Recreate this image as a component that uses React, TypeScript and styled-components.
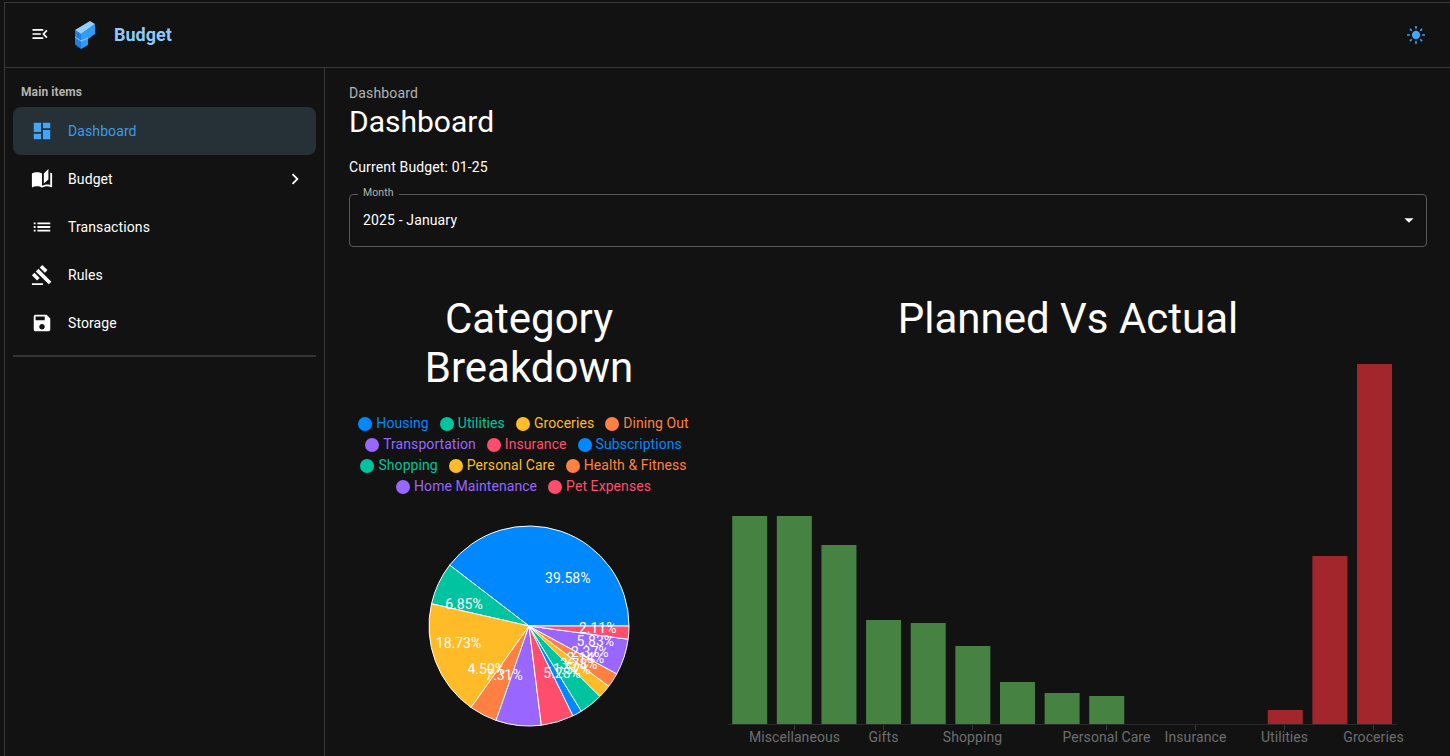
import React from 'react';
import styled, { createGlobalStyle } from 'styled-components';
import {
  MdMenuOpen,
  MdLightMode,
  MdDashboard,
  MdAutoStories,
  MdList,
  MdGavel,
  MdSave,
  MdChevronRight,
  MdArrowDropDown,
} from 'react-icons/md';

//#region Styled Components
const GlobalStyle = createGlobalStyle`
  html, body {
    margin: 0;
    padding: 0;
    height: 100%;
    overflow: hidden;
    background: #121212;
    font-family: Roboto, "Liberation Sans", sans-serif;
    color: #fff;
  }
`;

const Shell = styled.div`
  box-sizing: border-box;
  height: 756px;
  margin-top: 2px;
  margin-left: 4px;
  border-top: 1px solid #3a3a3a;
  border-left: 1px solid #3a3a3a;
  display: flex;
  flex-direction: column;
`;

const TopBar = styled.header`
  flex: none;
  height: 65px;
  box-sizing: border-box;
  border-bottom: 1px solid #3a3a3a;
  display: flex;
  align-items: center;
  padding: 0 24px 0 25px;
`;

const MenuButton = styled.div`
  display: flex;
  margin-bottom: 3px;
  font-size: 20px;
  color: #fff;
`;

const LogoBox = styled.div`
  display: flex;
  margin-left: 24px;
  margin-bottom: 1px;
`;

const BrandName = styled.div`
  margin-left: 19px;
  margin-bottom: 1px;
  font-size: 18px;
  font-weight: 700;
  color: #90caf9;
`;

const ThemeButton = styled.div`
  display: flex;
  margin-left: auto;
  font-size: 20px;
  color: #42a5f5;
`;

const Body = styled.div`
  flex: 1;
  display: flex;
  min-height: 0;
`;

const Sidebar = styled.aside`
  flex: none;
  width: 320px;
  box-sizing: border-box;
  border-right: 1px solid #3a3a3a;
  padding: 0 8px;
`;

const NavHeading = styled.div`
  height: 39px;
  padding: 16px 0 0 8px;
  box-sizing: border-box;
  font-size: 12px;
  line-height: 16px;
  font-weight: 700;
  letter-spacing: 0.1px;
  color: #b3b3b3;
`;

const NavItem = styled.div<{ $active?: boolean }>`
  height: 48px;
  box-sizing: border-box;
  display: flex;
  align-items: center;
  padding: 0 10px 0 18px;
  border-radius: 8px;
  font-size: 14px;
  letter-spacing: 0.1px;
  background: ${(p) => (p.$active ? '#263037' : 'transparent')};
  color: ${(p) => (p.$active ? '#42a5f5' : '#fff')};
`;

const NavIcon = styled.span`
  display: flex;
  width: 37px;
  font-size: 22px;
`;

const NavLabel = styled.span<{ $active?: boolean }>`
  flex: 1;
  color: ${(p) => (p.$active ? '#3f9ae5' : 'inherit')};
`;

const Chevron = styled.span`
  display: flex;
  font-size: 22px;
`;

const NavDivider = styled.div`
  height: 2px;
  margin-top: 8px;
  background: #333;
`;

const Main = styled.main`
  flex: 1;
  min-width: 0;
  box-sizing: border-box;
  padding: 15px 23px 0 24px;
`;

const Crumb = styled.div`
  font-size: 14px;
  line-height: 20px;
  color: #b3b3b3;
  letter-spacing: 0.15px;
`;

const PageTitle = styled.h1`
  margin: 0;
  font-size: 30px;
  line-height: 38px;
  font-weight: 400;
`;

const CurrentBudget = styled.div`
  margin-top: 16px;
  font-size: 14px;
  line-height: 20px;
  letter-spacing: 0.14px;
`;

const SelectField = styled.div`
  position: relative;
  margin-top: 17px;
  height: 53px;
  box-sizing: border-box;
  border: 1px solid #5a5a5a;
  border-radius: 4px;
  display: flex;
  align-items: center;
  padding: 0 6px 2px 13px;
  font-size: 14px;
  letter-spacing: 0.14px;
`;

const SelectLegend = styled.span`
  position: absolute;
  top: -9px;
  left: 8px;
  padding: 0 5px;
  background: #121212;
  font-size: 10.5px;
  line-height: 14px;
  letter-spacing: 0.1px;
  color: #b3b3b3;
`;

const SelectValue = styled.span`
  flex: 1;
`;

const SelectArrow = styled.span`
  display: flex;
  font-size: 22px;
  color: #fff;
`;

const ChartRow = styled.section`
  margin-top: 47px;
  display: flex;
`;

const PieColumn = styled.div`
  flex: none;
  width: 360px;
  display: flex;
  flex-direction: column;
  align-items: center;
`;

const BarColumn = styled.div`
  flex: 1;
  min-width: 0;
  display: flex;
  flex-direction: column;
`;

const ChartTitle = styled.h2`
  margin: 0;
  width: 100%;
  padding: 0 60px;
  box-sizing: border-box;
  text-align: center;
  font-size: 42px;
  line-height: 49px;
  font-weight: 400;
`;

const Legend = styled.div`
  margin-top: 21px;
  width: 346px;
  display: flex;
  flex-wrap: wrap;
  justify-content: center;
`;

const LegendEntry = styled.span<{ $color: string }>`
  display: inline-flex;
  align-items: center;
  gap: 4px;
  margin-right: 11px;
  font-size: 14px;
  line-height: 21px;
  letter-spacing: 0.07px;
  color: ${(p) => p.$color};
  &::before {
    content: '';
    width: 14px;
    height: 14px;
    border-radius: 50%;
    background: ${(p) => p.$color};
  }
`;

const PieFrame = styled.svg`
  display: block;
  margin-top: 28px;
  overflow: visible;
`;

const BarFrame = styled.svg`
  display: block;
  margin-top: 21px;
`;
//#endregion

const categories = [
  { name: 'Housing', pct: 39.58, color: '#0088fe' },
  { name: 'Utilities', pct: 6.85, color: '#00c49f' },
  { name: 'Groceries', pct: 18.73, color: '#ffbb28' },
  { name: 'Dining Out', pct: 4.5, color: '#ff8042' },
  { name: 'Transportation', pct: 7.31, color: '#9966ff' },
  { name: 'Insurance', pct: 5.28, color: '#ff4d6d' },
  { name: 'Subscriptions', pct: 1.52, color: '#0088fe' },
  { name: 'Shopping', pct: 3.78, color: '#00c49f' },
  { name: 'Personal Care', pct: 2.14, color: '#ffbb28' },
  { name: 'Health & Fitness', pct: 2.37, color: '#ff8042' },
  { name: 'Home Maintenance', pct: 5.83, color: '#9966ff' },
  { name: 'Pet Expenses', pct: 2.11, color: '#ff4d6d' },
];

const navItems = [
  { label: 'Dashboard', icon: <MdDashboard />, active: true },
  { label: 'Budget', icon: <MdAutoStories />, arrow: true },
  { label: 'Transactions', icon: <MdList /> },
  { label: 'Rules', icon: <MdGavel /> },
  { label: 'Storage', icon: <MdSave /> },
];

const Logo = () => (
  <svg width="21" height="28" viewBox="0 0 21 28">
    <path d="M7 13 L21 3 L21 13 L14 18 L14 24 L7 28 Z" fill="#2f9cf8" />
    <path d="M1 9 L7 13 L7 28 L1 23.5 Z" fill="#1c7fe0" />
    <path d="M1 9 L16 0 L21 3 L7 13 Z" fill="#8fd0ff" />
    <path d="M1 16 L7 20 L14 17" fill="none" stroke="#b5e0ff" strokeWidth="0.7" />
  </svg>
);

const PIE_R = 100;
const PIE_C = 101;
const LABEL_R = 50;

const polar = (deg: number, r: number) => {
  const a = (deg * Math.PI) / 180;
  return [PIE_C + r * Math.cos(a), PIE_C - r * Math.sin(a)];
};

const PieChart = () => {
  let start = 0;
  const slices = categories.map((c) => {
    const sweep = (c.pct / 100) * 360;
    const [x1, y1] = polar(start, PIE_R);
    const [x2, y2] = polar(start + sweep, PIE_R);
    const [lx, ly] = polar(start + sweep / 2, LABEL_R);
    const d = `M${PIE_C} ${PIE_C} L${x1} ${y1} A${PIE_R} ${PIE_R} 0 ${sweep > 180 ? 1 : 0} 0 ${x2} ${y2} Z`;
    start += sweep;
    return { ...c, d, lx, ly };
  });
  return (
    <PieFrame width="202" height="202" viewBox="0 0 202 202">
      {slices.map((s) => (
        <path key={s.name} d={s.d} fill={s.color} stroke="#fff" strokeWidth="1" />
      ))}
      {slices.map((s) => (
        <text
          key={s.name}
          x={s.lx > PIE_C ? s.lx : s.lx - 1}
          y={s.ly - 1}
          fill="#fff"
          fontSize="14"
          fontFamily="Roboto, sans-serif"
          textAnchor={s.lx > PIE_C ? 'start' : 'end'}
          dominantBaseline="central"
        >
          {s.pct.toFixed(2)}%
        </text>
      ))}
    </PieFrame>
  );
};

const barHeights = [208, 208, 179, 104, 101, 78, 42, 31, 28, 0, 0, 0, 14, 168, 360];
const barTicks = [
  { x: 85.5, label: 'Miscellaneous' },
  { x: 174.5, label: 'Gifts' },
  { x: 263.5, label: 'Shopping' },
  { x: 397.5, label: 'Personal Care' },
  { x: 486.5, label: 'Insurance' },
  { x: 575.5, label: 'Utilities' },
  { x: 664.5, label: 'Groceries' },
];

const BarChart = () => (
  <BarFrame width="718" height="396" viewBox="0 0 718 396">
    {barHeights.map((h, i) => (
      <rect
        key={i}
        x={23.2 + i * 44.63}
        y={360 - h}
        width="35"
        height={h}
        fill={i < 12 ? '#468343' : '#a3262d'}
      />
    ))}
    <line x1="19" x2="688" y1="360.5" y2="360.5" stroke="#2a2a2a" />
    {barTicks.map((t) => (
      <g key={t.label}>
        <line x1={t.x} x2={t.x} y1="361" y2="366" stroke="#3a3a3a" />
        <text
          x={t.x}
          y="378"
          fill="#6e6e6e"
          fontSize="14"
          letterSpacing="0.08"
          fontFamily="Roboto, sans-serif"
          textAnchor="middle"
        >
          {t.label}
        </text>
      </g>
    ))}
  </BarFrame>
);

export default function App() {
  return (
    <>
      <GlobalStyle />
      <Shell>
        <TopBar>
          <MenuButton>
            <MdMenuOpen />
          </MenuButton>
          <LogoBox>
            <Logo />
          </LogoBox>
          <BrandName>Budget</BrandName>
          <ThemeButton>
            <MdLightMode />
          </ThemeButton>
        </TopBar>
        <Body>
          <Sidebar>
            <NavHeading>Main items</NavHeading>
            {navItems.map((item) => (
              <NavItem key={item.label} $active={item.active}>
                <NavIcon>{item.icon}</NavIcon>
                <NavLabel $active={item.active}>{item.label}</NavLabel>
                {item.arrow ? (
                  <Chevron>
                    <MdChevronRight />
                  </Chevron>
                ) : null}
              </NavItem>
            ))}
            <NavDivider />
          </Sidebar>
          <Main>
            <Crumb>Dashboard</Crumb>
            <PageTitle>Dashboard</PageTitle>
            <CurrentBudget>Current Budget: 01-25</CurrentBudget>
            <SelectField>
              <SelectLegend>Month</SelectLegend>
              <SelectValue>2025 - January</SelectValue>
              <SelectArrow>
                <MdArrowDropDown />
              </SelectArrow>
            </SelectField>
            <ChartRow>
              <PieColumn>
                <ChartTitle>Category Breakdown</ChartTitle>
                <Legend>
                  {categories.map((c) => (
                    <LegendEntry key={c.name} $color={c.color}>
                      {c.name}
                    </LegendEntry>
                  ))}
                </Legend>
                <PieChart />
              </PieColumn>
              <BarColumn>
                <ChartTitle>Planned Vs Actual</ChartTitle>
                <BarChart />
              </BarColumn>
            </ChartRow>
          </Main>
        </Body>
      </Shell>
    </>
  );
}
